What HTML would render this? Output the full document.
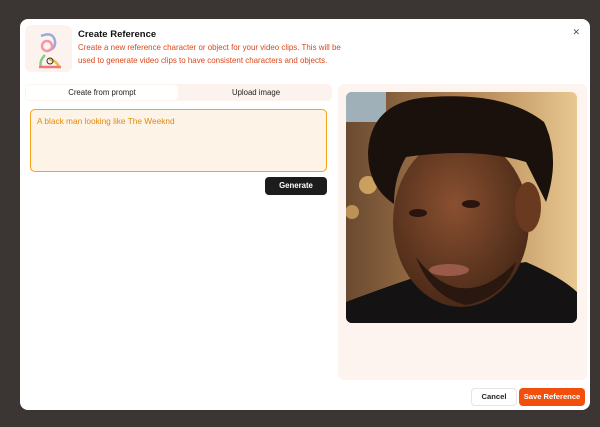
<!DOCTYPE html>
<html><head><style>
*{margin:0;padding:0;box-sizing:border-box}
body{width:600px;height:427px;background:#3b3633;font-family:"Liberation Sans",sans-serif;position:relative;overflow:hidden}
.modal{position:absolute;left:20px;top:19px;width:570px;height:391px;background:#fff;border-radius:8px}
.logo{position:absolute;left:5px;top:6px;width:47px;height:47px;background:#fdf3ee;border-radius:6px}
.title{position:absolute;left:58px;top:10px;font-size:9.5px;font-weight:bold;color:#111}
.desc{position:absolute;left:58px;top:23px;white-space:nowrap;font-size:7.95px;line-height:12.5px;color:#d9481c}
.close{position:absolute;right:10px;top:8px;font-size:9px;color:#555}
.tabs{position:absolute;left:5px;top:65px;width:307px;height:17px;background:#fdf3ee;border-radius:5px}
.tab1{position:absolute;left:1px;top:1px;width:152px;height:15px;background:#fff;border-radius:4px;font-size:7.8px;text-align:center;line-height:15px;color:#222}
.tab2{position:absolute;left:155px;top:1px;width:152px;height:15px;font-size:7.8px;text-align:center;line-height:15px;color:#222}
.ta{position:absolute;left:10px;top:90px;width:297px;height:63px;background:#fef3e7;border:1.5px solid #f5a21a;border-radius:5px;font-size:8.3px;color:#e08a10;padding:6px 6px}
.gen{position:absolute;left:245px;top:158px;width:62px;height:18px;background:#1c1c1c;border-radius:4px;color:#fff;font-size:7.8px;text-align:center;line-height:18px;font-weight:bold}
.rp{position:absolute;left:318px;top:65px;width:249px;height:296px;background:#fdf4f0;border-radius:6px}
.photo{position:absolute;left:8px;top:8px;width:231px;height:231px;border-radius:6px;overflow:hidden}
.cancel{position:absolute;left:451px;top:369px;width:46px;height:18px;border:1px solid #e5e5e5;border-radius:4px;font-size:7.6px;text-align:center;line-height:16px;color:#222;font-weight:bold}
.save{position:absolute;left:499px;top:369px;width:66px;height:18px;background:#f24f0d;border-radius:4px;font-size:7.6px;text-align:center;line-height:18px;color:#fff;font-weight:bold}
</style></head><body>
<div class="modal">
<div class="logo"><svg width="47" height="47"><g fill="none" stroke-width="2.5"><path d="M16 11 Q28 6 30 16 Q31 24 22 26" stroke="#9ad"/><circle cx="22" cy="21" r="5" stroke="#e9a"/><path d="M20 30 Q14 36 16 42" stroke="#8c8"/><path d="M24 34 Q32 36 34 42" stroke="#eb4"/><path d="M14 42 L36 42" stroke="#e77"/><circle cx="25" cy="36" r="3" stroke="#333" stroke-width="1"/></g></svg></div>
<div class="title">Create Reference</div>
<div class="desc">Create a new reference character or object for your video clips. This will be<br>used to generate video clips to have consistent characters and objects.</div>
<div class="close">✕</div>
<div class="tabs"><div class="tab1">Create from prompt</div><div class="tab2">Upload image</div></div>
<div class="ta">A black man looking like The Weeknd</div>
<div class="gen">Generate</div>
<div class="rp"><div class="photo"><svg width="231" height="231" viewBox="0 0 231 231">
<defs><linearGradient id="bg" x1="0" y1="0" x2="1" y2="0"><stop offset="0" stop-color="#6a4a30"/><stop offset=".5" stop-color="#b08050"/><stop offset="1" stop-color="#e8c890"/></linearGradient>
<radialGradient id="fc" cx=".45" cy=".4" r=".6"><stop offset="0" stop-color="#8a5030"/><stop offset="1" stop-color="#4a2a18"/></radialGradient></defs>
<rect width="231" height="231" fill="url(#bg)"/>
<rect width="40" height="30" fill="#a0b0b8"/>
<circle cx="22" cy="93" r="9" fill="#f0c070" opacity=".7"/><circle cx="6" cy="120" r="7" fill="#f0c070" opacity=".6"/>
<path d="M0 231 L0 210 Q40 195 70 185 L180 170 Q215 185 231 200 L231 231 Z" fill="#141212"/>
<ellipse cx="115" cy="130" rx="68" ry="85" fill="url(#fc)"/>
<ellipse cx="182" cy="115" rx="13" ry="25" fill="#6a3a20"/>
<path d="M70 165 Q115 225 170 170 Q160 205 120 213 Q85 205 70 165Z" fill="#2a1810"/>
<path d="M22 60 Q25 8 85 5 Q160 0 198 30 Q215 65 200 110 Q190 90 180 70 Q130 55 60 65 Q48 85 48 112 Q22 95 22 60Z" fill="#1a100c"/>
<ellipse cx="72" cy="121" rx="9" ry="4" fill="#2a1410"/><ellipse cx="125" cy="112" rx="9" ry="4" fill="#2a1410"/>
<ellipse cx="103" cy="178" rx="20" ry="6" fill="#9a5a4a"/>
</svg></div></div>
<div class="cancel">Cancel</div>
<div class="save">Save Reference</div>
</div>
</body></html>
